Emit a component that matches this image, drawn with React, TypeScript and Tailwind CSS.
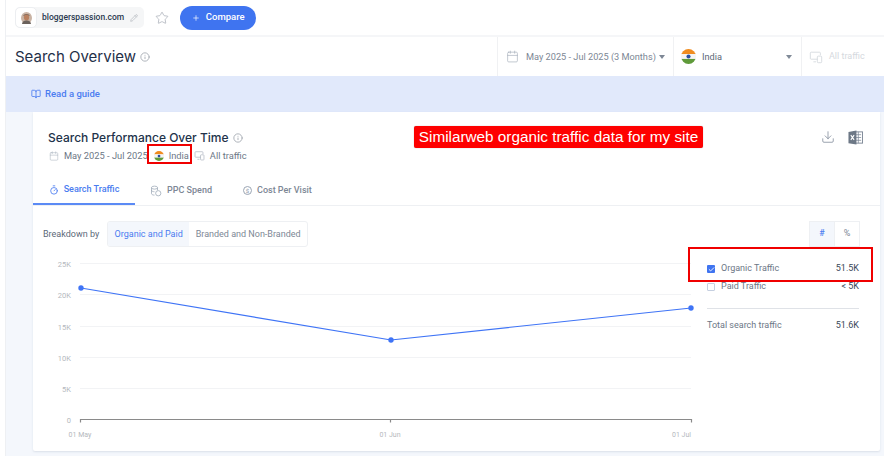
import { Plus, Pencil, Star, Info, BookOpen, Calendar, Download, Timer, Check } from "lucide-react";

const roboto = "font-['Roboto',sans-serif]";

function Flag({ size }: { size: number }) {
  return (
    <svg width={size} height={size} viewBox="0 0 16 16" className="shrink-0">
      <defs>
        <clipPath id={`flag-${size}`}>
          <circle cx="8" cy="8" r="8" />
        </clipPath>
      </defs>
      <g clipPath={`url(#flag-${size})`}>
        <rect width="16" height="5.4" fill="#f08c1f" />
        <rect y="5.4" width="16" height="5.2" fill="#f4f4f4" />
        <rect y="10.6" width="16" height="5.4" fill="#5f9a3a" />
        <circle cx="8" cy="8" r="2.2" fill="#2a4fa0" />
      </g>
    </svg>
  );
}

function Avatar() {
  return (
    <svg width="11" height="12" viewBox="0 0 11 12">
      <ellipse cx="5.5" cy="6" rx="5.5" ry="6" fill="#c9b3a4" />
      <path d="M2 4.5C2 1.5 9 1.5 9 4.5L8.5 3.5H2.5z" fill="#4a3a32" />
      <ellipse cx="5.5" cy="5.5" rx="2.6" ry="3" fill="#b9805f" />
      <path d="M1 12c.5-3 2.5-3.5 4.5-3.5S9.5 9 10 12z" fill="#6b625c" />
    </svg>
  );
}

function Caret({ color }: { color: string }) {
  return (
    <svg width="6" height="4" viewBox="0 0 6 4" className="shrink-0">
      <path d="M0 0h6L3 4z" fill={color} />
    </svg>
  );
}

function DevicesIcon({ className }: { className: string }) {
  return (
    <svg viewBox="0 0 16 16" fill="none" stroke="currentColor" strokeWidth="1" className={className}>
      <path d="M10 10.5H2.5a1 1 0 0 1-1-1v-6a1 1 0 0 1 1-1H12a1 1 0 0 1 1 1V6" />
      <rect x="9.5" y="7" width="5" height="7.5" rx="1" />
      <path d="M5 13.5h3" />
    </svg>
  );
}

function CoinsIcon() {
  return (
    <svg viewBox="0 0 16 16" fill="none" stroke="#9aa5b4" strokeWidth="1" className="h-[12px] w-[12px]">
      <ellipse cx="6" cy="3.5" rx="4" ry="2" />
      <path d="M2 3.5v8c0 1.1 1.8 2 4 2M10 3.5V7" />
      <path d="M2 7c0 1.1 1.8 2 4 2" />
      <circle cx="11" cy="11" r="3.5" />
    </svg>
  );
}

function ExcelIcon() {
  return (
    <svg viewBox="0 0 16 16" className="h-[15px] w-[15px]">
      <rect x="6" y="2" width="9.5" height="12" fill="#fff" stroke="#7c8796" strokeWidth="1" />
      <path d="M8 5h6M8 8h6M8 11h6M11 2v12" stroke="#7c8796" strokeWidth="0.8" />
      <path d="M0.5 2 9 .5v15L.5 14z" fill="#6d7886" />
      <path d="M3 5.5 6.5 10.5M6.5 5.5 3 10.5" stroke="#fff" strokeWidth="1.2" />
    </svg>
  );
}

function Chart() {
  const ticks = [
    { label: "25K", y: 16.5 },
    { label: "20K", y: 47.5 },
    { label: "15K", y: 79.5 },
    { label: "10K", y: 110.5 },
    { label: "5K", y: 141.5 },
  ];
  return (
    <svg width="650" height="200" viewBox="0 0 650 200" className="block">
      {ticks.map((t) => (
        <g key={t.label}>
          <line x1="32" x2="643" y1={t.y} y2={t.y} stroke="#f2f3f5" />
          <text x="23" y={t.y + 3} textAnchor="end" fontSize="7.5" fill="#b4b8bd">
            {t.label}
          </text>
        </g>
      ))}
      <text x="23" y="175.5" textAnchor="end" fontSize="7.5" fill="#b4b8bd">
        0
      </text>
      <path d="M32.5 175.5V172.5H643.5V175.5M342.5 172.5V175.5" fill="none" stroke="#8a8a8a" strokeWidth="1.2" />
      <polyline points="33,41 343,93 643,61" fill="none" stroke="#3f74f6" strokeWidth="1.2" />
      <circle cx="33" cy="41" r="2.7" fill="#3f74f6" />
      <circle cx="343" cy="93" r="2.7" fill="#3f74f6" />
      <circle cx="643" cy="61" r="2.7" fill="#3f74f6" />
      <text x="32" y="190" textAnchor="middle" fontSize="7" fill="#b4b8bd">
        01 May
      </text>
      <text x="342" y="190" textAnchor="middle" fontSize="7" fill="#b4b8bd">
        01 Jun
      </text>
      <text x="643" y="190" textAnchor="end" fontSize="7" fill="#b4b8bd">
        01 Jul
      </text>
    </svg>
  );
}

export default function App() {
  return (
    <div className={`relative h-[456px] w-[884px] overflow-hidden bg-white ${roboto}`}>
      <div className="ml-[5px] flex h-full flex-col border-l border-[#eef0f3]">
        {/* Top bar */}
        <div className="flex h-[37px] shrink-0 items-center border-b-2 border-[#f5f6f8] pl-[9px]">
          <div className="flex h-[21px] items-center rounded-[5px] bg-[#f5f6f7] pr-[6px]">
            <div className="flex h-[21px] w-[22px] items-center justify-center rounded-[5px] border border-[#eceef1] bg-white">
              <Avatar />
            </div>
            <span className="ml-[5px] text-[8.5px] font-medium text-[#2b3a50]">bloggerspassion.com</span>
            <Pencil className="ml-[6px] h-[8px] w-[8px] text-[#b0b5bc]" />
          </div>
          <Star className="ml-[11px] h-[14px] w-[14px] text-[#a9afb8]" strokeWidth={1.3} />
          <button className="ml-[11px] flex h-[24px] w-[76px] items-center justify-center gap-[6px] rounded-full bg-[#3f74f0] text-[9.5px] font-medium text-white">
            <Plus className="h-[8px] w-[8px]" />
            Compare
          </button>
        </div>

        {/* Page header */}
        <div className="flex h-[39px] shrink-0 items-center justify-between pl-[9px]">
          <div className="flex items-center gap-[4px]">
            <span className="font-['Inter',sans-serif] text-[15px] leading-none text-[#1f3049]">Search Overview</span>
            <Info className="h-[10px] w-[10px] text-[#a0a6ae]" />
          </div>
          <div className="flex h-full items-stretch">
            <div className="flex w-[177px] items-center border-x border-[#f0f1f3] pl-[8px] text-[9.2px] text-[#7d8795]">
              <Calendar className="h-[13px] w-[13px] text-[#aab2bd]" strokeWidth={1.3} />
              <span className="ml-[7px]">May 2025 - Jul 2025 (3 Months)</span>
              <span className="ml-[3px]">
                <Caret color="#7d8795" />
              </span>
            </div>
            <div className="flex w-[128px] items-center border-r border-[#f0f1f3] pl-[7px] text-[9.2px] text-[#5d6978]">
              <Flag size={15} />
              <span className="ml-[6px]">India</span>
              <span className="ml-auto mr-[9px]">
                <Caret color="#808a97" />
              </span>
            </div>
            <div className="flex w-[82px] items-center pl-[7px] text-[9px] text-[#d5d9de]">
              <DevicesIcon className="h-[14px] w-[14px] text-[#d5d9de]" />
              <span className="ml-[6px]">All traffic</span>
            </div>
          </div>
        </div>

        {/* Guide banner */}
        <div className="flex h-[36px] shrink-0 items-center gap-[4px] bg-[#e1e9fb] pl-[25px] text-[9.5px] font-medium text-[#4a7cf0]">
          <BookOpen className="h-[10px] w-[10px]" />
          Read a guide
        </div>

        {/* Content */}
        <div className="flex-1 bg-[#f4f7fc] pl-[27px] pr-[4px]">
          <div className="h-[339px] rounded-b-[2px] bg-white shadow-[0_1px_2px_rgba(200,208,220,0.6)]">
            <div className="flex h-[63px] justify-between pl-[15px] pr-[17px] pt-[18px]">
              <div>
                <div className="flex items-center gap-[5px]">
                  <span className="font-['Inter',sans-serif] text-[12px] font-medium leading-[15px] text-[#22324a]">
                    Search Performance Over Time
                  </span>
                  <Info className="h-[10px] w-[10px] text-[#9fa5ad]" />
                </div>
                <div className="mt-[4px] flex items-center text-[9.3px] text-[#6c7786]">
                  <Calendar className="ml-[1px] h-[10px] w-[10px] text-[#aab2bd]" strokeWidth={1.3} />
                  <span className="ml-[5px]">May 2025 - Jul 2025</span>
                  <span className="ml-[6px]">
                    <Flag size={10} />
                  </span>
                  <span className="ml-[5px]">India</span>
                  <DevicesIcon className="ml-[5px] h-[11px] w-[11px] text-[#aab2bd]" />
                  <span className="ml-[5px]">All traffic</span>
                </div>
              </div>
              <div className="flex items-start gap-[13px]">
                <Download className="h-[14px] w-[14px] text-[#7c8796]" strokeWidth={1.3} />
                <ExcelIcon />
              </div>
            </div>

            {/* Tabs */}
            <div className="flex h-[31px] border-b border-[#eef0f3] text-[9px] font-medium">
              <div className="flex w-[102px] items-center justify-center gap-[5px] border-b-2 border-[#5b8af5] pt-[2px] text-[#4a7cf0]">
                <Timer className="h-[10px] w-[10px]" />
                Search Traffic
              </div>
              <div className="ml-[15px] flex items-center gap-[5px] pt-[1px] text-[#7d8795]">
                <CoinsIcon />
                PPC Spend
              </div>
              <div className="ml-[31px] flex items-center gap-[5px] pt-[1px] text-[#7d8795]">
                <span className="flex h-[9px] w-[9px] items-center justify-center rounded-full border border-[#9aa5b4] text-[6px] leading-none text-[#9aa5b4]">
                  $
                </span>
                Cost Per Visit
              </div>
            </div>

            {/* Breakdown row */}
            <div className="flex items-start justify-between pl-[10px] pr-[20px] pt-[15px]">
              <div className="flex items-center text-[9px]">
                <span className="pt-[1px] text-[#5d6978]">Breakdown by</span>
                <div className="ml-[8px] flex h-[26px] overflow-hidden rounded-[3px] border border-[#eef0f3]">
                  <div className="flex w-[81px] items-center justify-center bg-[#f4f7fc] pt-[1px] text-[#4a7cf0]">Organic and Paid</div>
                  <div className="flex w-[118px] items-center justify-center pt-[1px] text-[#7d8795]">Branded and Non-Branded</div>
                </div>
              </div>
              <div className="flex h-[26px] border border-[#eef0f3] text-[9px]">
                <div className="flex w-[25px] items-center justify-center border-r border-[#eef0f3] bg-[#f4f7fc] font-medium text-[#4a7cf0]">#</div>
                <div className="flex w-[24px] items-center justify-center text-[#7d8795]">%</div>
              </div>
            </div>

            {/* Chart and legend */}
            <div className="flex">
              <div className="ml-[15px] w-[650px] shrink-0">
                <Chart />
              </div>
              <div className="ml-[9px] w-[152px] text-[9px]">
                <div className="mt-[13px] flex h-[18px] items-center justify-between text-[#6c7786]">
                  <span className="flex items-center gap-[6px]">
                    <span className="flex h-[8px] w-[8px] items-center justify-center rounded-[1px] bg-[#3f74f0]">
                      <Check className="h-[7px] w-[7px] text-white" strokeWidth={3} />
                    </span>
                    Organic Traffic
                  </span>
                  <span className="text-[#3a4757]">51.5K</span>
                </div>
                <div className="flex h-[18px] items-center justify-between text-[#6c7786]">
                  <span className="flex items-center gap-[6px]">
                    <span className="h-[8px] w-[8px] rounded-[1px] border border-[#c5cfe0]" />
                    Paid Traffic
                  </span>
                  <span className="text-[#3a4757]">&lt; 5K</span>
                </div>
                <div className="mt-[12px] flex justify-between border-t border-[#dfe2e7] pt-[10px] text-[#6c7786]">
                  <span>Total search traffic</span>
                  <span className="text-[#3a4757]">51.6K</span>
                </div>
              </div>
            </div>
          </div>
        </div>
      </div>

      {/* Annotations added over the screenshot */}
      <div className="absolute left-[414px] top-[126px] flex h-[22px] w-[289px] items-center justify-center rounded-[2px] bg-[#fe0000] font-['Liberation_Sans',sans-serif] text-[15.3px] text-white shadow-[0_0_1px_rgba(0,0,0,0.4)]">
        Similarweb organic traffic data for my site
      </div>
      <div className="absolute left-[147px] top-[144px] h-[20px] w-[45px] border-[2px] border-[#f00000]" />
      <div className="absolute left-[688px] top-[247px] h-[35px] w-[185px] border-[2px] border-[#f00000]" />
    </div>
  );
}
